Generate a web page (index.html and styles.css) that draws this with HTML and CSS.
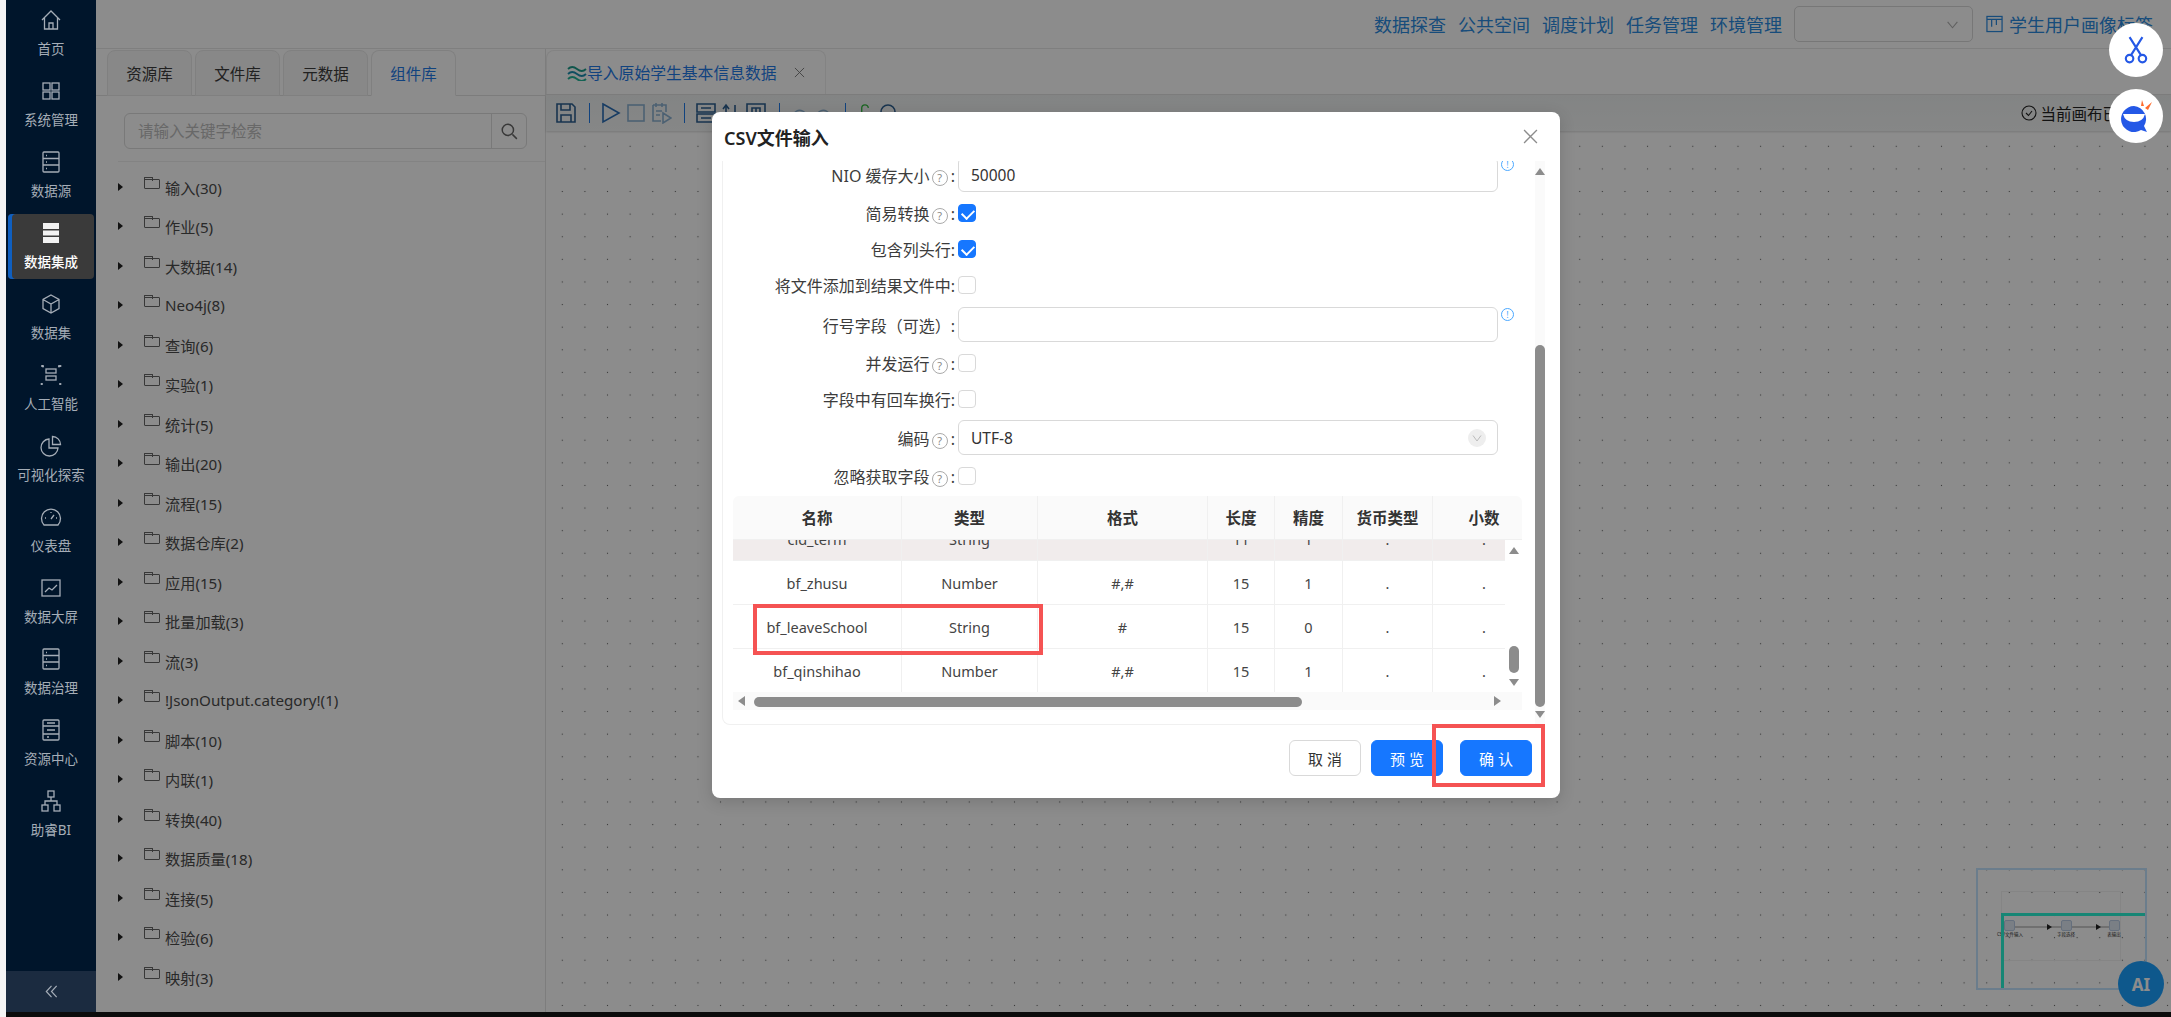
FILE: index.html
```html
<!DOCTYPE html>
<html lang="zh-CN">
<head>
    <meta charset="UTF-8">
    <title>数据集成</title>
    <link rel="stylesheet" href="styles.css">
</head>
<body>
    <div class="app">
        <aside class="sidebar">
            <nav class="nav">
                <a class="nav-item"><svg class="nav-icon" viewBox="0 0 24 24"><path d="M3 12 12 3l9 9M5.500 10v11h13V10M10 21v-6h4v6"/></svg><span>首页</span></a>
                <a class="nav-item"><svg class="nav-icon" viewBox="0 0 24 24"><rect x="4" y="4" width="7" height="7"/><rect x="13" y="4" width="7" height="7"/><rect x="4" y="13" width="7" height="7"/><rect x="13" y="13" width="7" height="7"/></svg><span>系统管理</span></a>
                <a class="nav-item"><svg class="nav-icon" viewBox="0 0 24 24"><rect x="4" y="2" width="16" height="20" rx="1"/><path d="M4 8.500h16M4 15h16M7 5.500h1M7 12h1M7 18.500h1"/></svg><span>数据源</span></a>
                <a class="nav-item active"><svg class="nav-icon" viewBox="0 0 24 24"><path class="solid" d="M4 2h16v6H4zM4 9.500h16v5H4zM4 16h16v6H4z"/></svg><span>数据集成</span></a>
                <a class="nav-item"><svg class="nav-icon" viewBox="0 0 24 24"><path d="M12 3l8 4.500v9L12 21l-8-4.500v-9zM4 7.500l8 4.500 8-4.500M12 12v9"/></svg><span>数据集</span></a>
                <a class="nav-item"><svg class="nav-icon" viewBox="0 0 24 24"><path class="dots" d="M3 3h.5M21 3h.5M2.500 21h.5M21 21h.5M4 3v.5M20 3v.5"/><rect x="7" y="6" width="10" height="4"/><rect x="7" y="13" width="10" height="4"/></svg><span>人工智能</span></a>
                <a class="nav-item"><svg class="nav-icon" viewBox="0 0 24 24"><path d="M10 5a8.500 8.500 0 1 0 9 9h-9zM13.500 2.500v8h8a8 8 0 0 0-8-8z"/></svg><span>可视化探索</span></a>
                <a class="nav-item"><svg class="nav-icon" viewBox="0 0 24 24"><path d="M5 20a9.500 9.500 0 1 1 14 0zM12 14l3-4M6 13h1M17 13h1M12 7v1"/></svg><span>仪表盘</span></a>
                <a class="nav-item"><svg class="nav-icon" viewBox="0 0 24 24"><rect x="3" y="4" width="18" height="16"/><path d="M6 16l4-4 3 2 5-5"/></svg><span>数据大屏</span></a>
                <a class="nav-item"><svg class="nav-icon" viewBox="0 0 24 24"><rect x="4" y="2" width="16" height="20" rx="1"/><path d="M4 8.500h16M4 15h16M7 5.500h1M7 12h1M7 18.500h1"/></svg><span>数据治理</span></a>
                <a class="nav-item"><svg class="nav-icon" viewBox="0 0 24 24"><rect x="4" y="2" width="16" height="20" rx="1"/><path d="M4 8h16M4 16h16M8 5h8M8 12h8M8 19h2"/></svg><span>资源中心</span></a>
                <a class="nav-item"><svg class="nav-icon" viewBox="0 0 24 24"><rect x="9" y="2" width="6" height="6"/><rect x="3" y="16" width="6" height="6"/><rect x="15" y="16" width="6" height="6"/><path d="M12 8v4M6 16v-4h12v4"/></svg><span>助睿BI</span></a>
            </nav>
            <div class="collapse">
                <svg viewBox="0 0 16 16"><path d="M8 2 2.500 8 8 14M13.500 2 8 8l5.500 6"/></svg>
            </div>
        </aside>

        <main class="main">
            <header class="topbar">
                <a class="top-link">数据探查</a>
                <a class="top-link">公共空间</a>
                <a class="top-link">调度计划</a>
                <a class="top-link">任务管理</a>
                <a class="top-link">环境管理</a>
                <div class="top-select"><svg viewBox="0 0 12 12"><path d="M1.500 3.500 6 9l4.500-5.500"/></svg></div>
                <svg class="project-icon" viewBox="0 0 18 18"><rect x="1" y="1" width="16" height="16"/><path d="M1 4h16M6 4v8M11 4v6"/></svg>
                <a class="top-link">学生用户画像标签</a>
            </header>

            <div class="workspace">
                <section class="panel">
                    <div class="tabs">
                        <div class="tab">资源库</div>
                        <div class="tab">文件库</div>
                        <div class="tab">元数据</div>
                        <div class="tab current">组件库</div>
                    </div>
                    <div class="search">
                        <div class="search-input">请输入关键字检索</div>
                        <div class="search-btn"><svg viewBox="0 0 16 16"><circle cx="7" cy="7" r="5"/><path d="m11 11 4 4"/></svg></div>
                    </div>
                    <ul class="tree">
                        <li><i class="caret"></i><i class="folder"></i>输入(30)</li>
                        <li><i class="caret"></i><i class="folder"></i>作业(5)</li>
                        <li><i class="caret"></i><i class="folder"></i>大数据(14)</li>
                        <li><i class="caret"></i><i class="folder"></i>Neo4j(8)</li>
                        <li><i class="caret"></i><i class="folder"></i>查询(6)</li>
                        <li><i class="caret"></i><i class="folder"></i>实验(1)</li>
                        <li><i class="caret"></i><i class="folder"></i>统计(5)</li>
                        <li><i class="caret"></i><i class="folder"></i>输出(20)</li>
                        <li><i class="caret"></i><i class="folder"></i>流程(15)</li>
                        <li><i class="caret"></i><i class="folder"></i>数据仓库(2)</li>
                        <li><i class="caret"></i><i class="folder"></i>应用(15)</li>
                        <li><i class="caret"></i><i class="folder"></i>批量加载(3)</li>
                        <li><i class="caret"></i><i class="folder"></i>流(3)</li>
                        <li><i class="caret"></i><i class="folder"></i>!JsonOutput.category!(1)</li>
                        <li><i class="caret"></i><i class="folder"></i>脚本(10)</li>
                        <li><i class="caret"></i><i class="folder"></i>内联(1)</li>
                        <li><i class="caret"></i><i class="folder"></i>转换(40)</li>
                        <li><i class="caret"></i><i class="folder"></i>数据质量(18)</li>
                        <li><i class="caret"></i><i class="folder"></i>连接(5)</li>
                        <li><i class="caret"></i><i class="folder"></i>检验(6)</li>
                        <li><i class="caret"></i><i class="folder"></i>映射(3)</li>
                    </ul>
                </section>

                <section class="editor">
                    <div class="editor-tabs">
                        <div class="editor-tab">
                            <svg class="wave" viewBox="0 0 20 16"><path d="M1 4q4-4 9 0t9 0"/><path class="mid" d="M1 9q4-4 9 0t9 0"/><path class="low" d="M1 14q4-4 9 0t9 0"/></svg>
                            <span>导入原始学生基本信息数据</span>
                            <svg class="tab-close" viewBox="0 0 12 12"><path d="m1 1 10 10M11 1 1 11"/></svg>
                        </div>
                    </div>
                    <div class="toolbar">
                        <svg class="tool" viewBox="0 0 22 22"><path class="dark" d="M2 2h15l3 3v15H2z"/><path class="dark" d="M6 2v6h9V2M6 20v-7h10v7"/></svg>
                        <i class="tool-sep"></i>
                        <svg class="tool" viewBox="0 0 22 22"><path d="M3 2l16 9-16 9z"/></svg>
                        <svg class="tool" viewBox="0 0 22 22"><rect class="soft" x="3" y="3" width="16" height="16"/></svg>
                        <svg class="tool" viewBox="0 0 22 22"><path class="soft" d="M3 3h13v7M3 3v16h8M6 1v4M12 1v4M6 9h6M6 13h4M13 11l8 5-8 5z"/></svg>
                        <i class="tool-sep"></i>
                        <svg class="tool" viewBox="0 0 22 22"><path class="dark" d="M2 2h18v8H2zM2 12h18v8H2zM6 6h10M6 16h10"/></svg>
                        <svg class="tool" viewBox="0 0 22 22"><path class="dark" d="M6 20V3M3 7l3-4 3 4M15 3v17"/></svg>
                        <svg class="tool" viewBox="0 0 22 22"><path class="dark" d="M2 2h18v18H2zM7 6h8v8H7zM11 6v8"/></svg>
                        <i class="tool-sep"></i>
                        <svg class="tool narrow" viewBox="0 0 22 22"><path class="soft" d="M4 12q6-8 14 0"/></svg>
                        <svg class="tool narrow" viewBox="0 0 22 22"><path class="soft" d="M4 12q8-8 14 0"/></svg>
                        <i class="tool-sep"></i>
                        <svg class="tool thin" viewBox="0 0 22 22"><path class="green" d="M15 5a4 4 0 0 0-8 0v12"/></svg>
                        <svg class="tool" viewBox="0 0 22 22"><circle class="dark" cx="11" cy="10" r="7"/></svg>
                        <div class="saved">
                            <svg viewBox="0 0 16 16"><circle cx="8" cy="8" r="7"/><path d="m5 8 2.500 2.500L11 6"/></svg>
                            <span>当前画布已保存</span>
                        </div>
                    </div>
                    <div class="canvas">
                        <div class="minimap">
                            <div class="mini-graph"></div>
                            <div class="mini-line"></div>
                            <i class="mini-arrow a1"></i>
                            <i class="mini-arrow a2"></i>
                            <div class="mini-node n1"><b></b>CSV文件输入</div>
                            <div class="mini-node n2"><b></b>字段选择</div>
                            <div class="mini-node n3"><b></b>表输出</div>
                            <div class="mini-view"></div>
                        </div>
                        <div class="ai-btn">AI</div>
                    </div>
                </section>
            </div>

            <div class="mask"></div>

            <div class="dialog">
                <div class="dialog-head">
                    <span class="dialog-title">CSV文件输入</span>
                    <svg class="dialog-close" viewBox="0 0 14 14"><path d="m1 1 12 12M13 1 1 13"/></svg>
                </div>
                <div class="dialog-body">
                    <div class="scroll-box">
                        <div class="form">
                            <div class="form-row field first">
                                <label>NIO 缓存大小 <i class="help">?</i>:</label>
                                <div class="input">50000</div>
                                <i class="info">!</i>
                            </div>
                            <div class="form-row">
                                <label>简易转换 <i class="help">?</i>:</label>
                                <i class="check on"></i>
                            </div>
                            <div class="form-row">
                                <label>包含列头行:</label>
                                <i class="check on"></i>
                            </div>
                            <div class="form-row">
                                <label>将文件添加到结果文件中:</label>
                                <i class="check"></i>
                            </div>
                            <div class="form-row field">
                                <label>行号字段（可选）:</label>
                                <div class="input"></div>
                                <i class="info">!</i>
                            </div>
                            <div class="form-row">
                                <label>并发运行 <i class="help">?</i>:</label>
                                <i class="check"></i>
                            </div>
                            <div class="form-row">
                                <label>字段中有回车换行:</label>
                                <i class="check"></i>
                            </div>
                            <div class="form-row field encoding">
                                <label>编码 <i class="help">?</i>:</label>
                                <div class="input select">UTF-8<svg viewBox="0 0 12 12"><path d="M2 3.500 6 9l4-5.500"/></svg></div>
                            </div>
                            <div class="form-row">
                                <label>忽略获取字段 <i class="help">?</i>:</label>
                                <i class="check"></i>
                            </div>
                        </div>

                        <div class="grid">
                            <div class="grid-row grid-head">
                                <div>名称</div><div>类型</div><div>格式</div><div>长度</div><div>精度</div><div>货币类型</div><div>小数</div>
                            </div>
                            <div class="grid-body">
                                <div class="grid-rows">
                                    <div class="grid-row odd">
                                        <div>cid_term</div><div>String</div><div></div><div>11</div><div>1</div><div>.</div><div>.</div>
                                    </div>
                                    <div class="grid-row">
                                        <div>bf_zhusu</div><div>Number</div><div>#,#</div><div>15</div><div>1</div><div>.</div><div>.</div>
                                    </div>
                                    <div class="grid-row">
                                        <div>bf_leaveSchool</div><div>String</div><div>#</div><div>15</div><div>0</div><div>.</div><div>.</div>
                                    </div>
                                    <div class="grid-row">
                                        <div>bf_qinshihao</div><div>Number</div><div>#,#</div><div>15</div><div>1</div><div>.</div><div>.</div>
                                    </div>
                                </div>
                                <div class="vbar small">
                                    <i class="arrow up"></i>
                                    <i class="thumb"></i>
                                    <i class="arrow down"></i>
                                </div>
                            </div>
                            <div class="hbar">
                                <i class="arrow left"></i>
                                <i class="thumb"></i>
                                <i class="arrow right"></i>
                            </div>
                            <div class="mark mark-row"></div>
                        </div>
                    </div>
                    <div class="vbar">
                        <i class="arrow up"></i>
                        <i class="thumb"></i>
                        <i class="arrow down"></i>
                    </div>
                </div>
                <div class="dialog-foot">
                    <button class="btn">取 消</button>
                    <button class="btn primary">预 览</button>
                    <button class="btn primary last">确 认</button>
                </div>
                <div class="mark mark-btn"></div>
            </div>

            <div class="float-btn scissors">
                <svg viewBox="0 0 28 28"><circle cx="8" cy="22" r="3.500"/><circle cx="20" cy="22" r="3.500"/><path d="M9.500 18.500 20 2M18.500 18.500 8 2"/></svg>
            </div>
            <div class="float-btn robot">
                <svg viewBox="0 0 32 34"><path class="face" d="M14 7a13 13 0 1 0 7 24l6 2-3-6a13 13 0 0 0-10-20z"/><path class="smile" d="M3 15h22q-2 8-11 8t-11-8z"/><path class="spark" d="M21 7l1-6 2 6zM25 9l7-6-4 8z"/></svg>
            </div>
        </main>
    </div>
</body>
</html>
```

FILE: styles.css
```css
* {
    box-sizing: border-box;
}
html, body {
    margin: 0;
    padding: 0;
    height: 1017px;
    overflow: hidden;
}
body {
    background: #0c0c0c;
    border-left: 6px solid #f4f4f4;
    font-family: "Noto Sans", "Noto Sans CJK SC", sans-serif;
    font-size: 16px;
    color: #333;
}
svg {
    display: block;
    fill: none;
}
i {
    font-style: normal;
}
.app {
    display: flex;
    height: 1012px;
}

/* left menu */
.sidebar {
    width: 90px;
    flex: none;
    display: flex;
    flex-direction: column;
    background: #00152b;
}
.nav {
    flex: 1;
    padding-top: 1px;
}
.nav-item {
    display: flex;
    flex-direction: column;
    align-items: center;
    height: 65px;
    margin: 0 2px 6px;
    padding-top: 5px;
    border-radius: 4px;
    color: #a5adb7;
    font-size: 13.5px;
    line-height: 20px;
    white-space: nowrap;
}
.nav-item span {
    margin-top: 5px;
}
.nav-icon {
    width: 24px;
    height: 28px;
    stroke: #a5adb7;
    stroke-width: 1.300;
}
.nav-icon .dots {
    stroke-width: 2;
    stroke-linecap: round;
}
.nav-item.active {
    background: #3a3a3a;
    color: #fff;
    font-weight: 500;
    box-shadow: inset 4px 0 0 #0f5fc0;
}
.nav-item.active .nav-icon {
    stroke: none;
}
.nav-item.active .solid {
    fill: #f2f2f2;
}
.collapse {
    height: 41px;
    flex: none;
    display: flex;
    align-items: center;
    justify-content: center;
    background: #1b2b40;
}
.collapse svg {
    width: 15px;
    height: 15px;
    stroke: #a5adb7;
    stroke-width: 1.300;
}

/* main area, the mask dims all of it */
.main {
    position: relative;
    flex: 1;
    display: flex;
    flex-direction: column;
    min-width: 0;
    background: #fff;
}
.mask {
    position: absolute;
    inset: 0;
    background: rgba(0, 0, 0, 0.45);
}
.topbar {
    height: 49px;
    flex: none;
    display: flex;
    align-items: center;
    justify-content: flex-end;
    padding: 0 18px 0 0;
    border-bottom: 1px solid #e8e8e8;
}
.top-link {
    margin-left: 12px;
    font-size: 18px;
    color: #2a8ae0;
    white-space: nowrap;
}
.top-select {
    width: 179px;
    height: 36px;
    margin-left: 12px;
    display: flex;
    align-items: center;
    justify-content: flex-end;
    padding-right: 13px;
    border: 1px solid #d9d9d9;
    border-radius: 5px;
}
.top-select svg {
    width: 13px;
    height: 13px;
    stroke: #b0b0b0;
}
.project-icon {
    width: 17px;
    height: 24px;
    margin-left: 13px;
    margin-right: -6px;
    stroke: #2a8ae0;
    stroke-width: 1.300;
}
.workspace {
    flex: 1;
    display: flex;
    min-height: 0;
}

/* component panel */
.panel {
    width: 450px;
    flex: none;
    border-right: 1px solid #e4e4e4;
}
.tabs {
    display: flex;
    gap: 3px;
    height: 47px;
    padding: 1px 0 0 11px;
    border-bottom: 1px solid #e2e2e2;
}
.tab {
    width: 85px;
    height: 46px;
    display: flex;
    align-items: center;
    justify-content: center;
    background: #f7f7f7;
    border: 1px solid #eaeaea;
    border-radius: 8px 8px 0 0;
    font-size: 15.5px;
    color: #3c3c3c;
}
.tab.current {
    background: #fff;
    border-bottom-color: #fff;
    color: #1f7ae8;
}
.search {
    display: flex;
    width: 403px;
    height: 36px;
    margin: 17px 0 0 28px;
    border: 1px solid #dcdcdc;
    border-radius: 6px;
}
.search-input {
    flex: 1;
    padding-left: 13px;
    line-height: 34px;
    font-size: 15.5px;
    color: #bdbdbd;
}
.search-btn {
    width: 35px;
    display: flex;
    align-items: center;
    justify-content: center;
    border-left: 1px solid #dcdcdc;
}
.search-btn svg {
    width: 18px;
    height: 18px;
    stroke: #666;
    stroke-width: 1.300;
}
.tree {
    list-style: none;
    margin: 12px 0 0 22px;
    padding: 5px 0 0;
    border-top: 1px solid #eee;
}
.tree li {
    display: flex;
    align-items: center;
    height: 39.500px;
    font-size: 15.200px;
    color: #4c4c4c;
    white-space: nowrap;
}
.caret {
    width: 0;
    height: 0;
    margin-left: 0;
    border-left: 5px solid #222;
    border-top: 4px solid transparent;
    border-bottom: 4px solid transparent;
}
.folder {
    position: relative;
    width: 16px;
    height: 10px;
    margin: -6px 5px 0 21px;
    border: 1.300px solid #666;
    border-radius: 1px;
}
.folder::before {
    content: "";
    position: absolute;
    left: -1px;
    top: -3px;
    width: 7px;
    height: 3px;
    border: 1.300px solid #666;
    border-bottom: none;
    border-radius: 1px 1px 0 0;
}

/* editor side */
.editor {
    flex: 1;
    display: flex;
    flex-direction: column;
    min-width: 0;
}
.editor-tabs {
    height: 46px;
    flex: none;
    padding-top: 1px;
    border-bottom: 1px solid #e4e4e4;
}
.editor-tab {
    display: flex;
    align-items: center;
    width: 280px;
    height: 44px;
    padding-left: 20px;
    border: 1px solid #eee;
    border-bottom: none;
    border-radius: 8px 8px 0 0;
    font-size: 15.800px;
    color: #1f7ae8;
    white-space: nowrap;
}
.wave {
    width: 20px;
    height: 16px;
    stroke: #1c9c8a;
    stroke-width: 1.800;
}
.wave .mid {
    stroke: #1d8fb0;
}
.wave .low {
    stroke: #25b59a;
}
.tab-close {
    width: 11px;
    height: 11px;
    margin-left: 17px;
    stroke: #777;
}
.toolbar {
    height: 36px;
    flex: none;
    display: flex;
    align-items: center;
    padding-left: 9px;
    background: linear-gradient(#eef1f1, #f4f6f6);
    box-shadow: 0 1px 2px rgba(0, 0, 0, 0.15);
}
.tool {
    width: 22px;
    height: 22px;
    margin-right: 3px;
    stroke: #2a6db5;
    stroke-width: 1.600;
}
.tool.narrow {
    width: 20px;
}
.tool.thin {
    width: 18px;
}
.tool .dark {
    stroke: #2d5f90;
}
.tool .soft {
    stroke: #8ab0d0;
}
.tool .green {
    stroke: #2fb83c;
}
.tool-sep {
    width: 1px;
    height: 20px;
    margin: 0 10px 0 9px;
    background: #1f7ae8;
}
.saved {
    display: flex;
    align-items: center;
    gap: 3px;
    margin-left: auto;
    padding-right: 22px;
    font-size: 15.500px;
    color: #222;
}
.saved svg {
    width: 16px;
    height: 16px;
    stroke: #222;
    stroke-width: 1.100;
}
.canvas {
    position: relative;
    flex: 1;
    background-image: radial-gradient(circle, #666 0.7px, transparent 1px);
    background-size: 22.620px 22.620px;
    background-position: 5px 4px;
}

/* the small map sits freely on the canvas */
.minimap {
    position: absolute;
    left: 1430px;
    top: 737px;
    width: 171px;
    height: 122px;
    border: 2px solid #c4e4ff;
}
.mini-graph {
    position: absolute;
    left: 23px;
    top: 21px;
    width: 120px;
    height: 70px;
    border: 1px solid #f2f2f2;
}
.mini-view {
    position: absolute;
    left: 23px;
    top: 43px;
    right: 0;
    bottom: 0;
    border-left: 3px solid #2af5d5;
    border-top: 3px solid #2af5d5;
}
.mini-line {
    position: absolute;
    left: 30px;
    top: 56px;
    width: 105px;
    height: 2px;
    background: #ccc;
}
.mini-arrow {
    position: absolute;
    top: 54px;
    border-left: 5px solid #222;
    border-top: 3px solid transparent;
    border-bottom: 3px solid transparent;
}
.a1 {
    left: 69px;
}
.a2 {
    left: 118px;
}
.mini-node {
    position: absolute;
    top: 50px;
    width: 24px;
    font-size: 4.500px;
    line-height: 6px;
    text-align: center;
    white-space: nowrap;
}
.mini-node b {
    display: block;
    width: 11px;
    height: 11px;
    margin: 0 auto;
    background: #dfe8f3;
    border: 1px solid #b8cbe4;
    border-radius: 2px;
}
.n1 {
    left: 19px;
}
.n2 {
    left: 76px;
}
.n3 {
    left: 124px;
}
.ai-btn {
    position: absolute;
    left: 1572px;
    top: 830px;
    width: 46px;
    height: 46px;
    display: flex;
    align-items: center;
    justify-content: center;
    border-radius: 50%;
    background: #1aa0ff;
    color: #fff;
    font-size: 17px;
    font-weight: 700;
}

/* dialog */
.dialog {
    position: absolute;
    left: 616px;
    top: 112px;
    width: 848px;
    height: 686px;
    display: flex;
    flex-direction: column;
    background: #fff;
    border-radius: 8px;
    box-shadow: 0 4px 16px rgba(0, 0, 0, 0.15);
}
.dialog-head {
    height: 49px;
    flex: none;
    display: flex;
    align-items: center;
    justify-content: space-between;
    padding: 0 22px 0 12px;
}
.dialog-title {
    font-size: 18px;
    font-weight: 600;
    color: #222;
}
.dialog-close {
    width: 15px;
    height: 15px;
    stroke: #8c8c8c;
    stroke-width: 1.200;
}
.dialog-body {
    display: flex;
    height: 564px;
    margin: 0 15px 0 10px;
    border-left: 1px solid #f0f0f0;
    border-bottom: 1px solid #f0f0f0;
    border-bottom-left-radius: 8px;
    flex: none;
}
.scroll-box {
    position: relative;
    flex: 1;
    min-width: 0;
    overflow: hidden;
}
.form {
    margin-top: -4px;
}
.form-row {
    display: flex;
    align-items: center;
    height: 36px;
}
.form-row.field {
    height: 35px;
    margin: 4px 0 3px;
    align-items: center;
}
.form-row.first {
    margin-top: 0;
}
.form-row.encoding {
    margin-top: 3px;
}
.form-row label {
    width: 235px;
    flex: none;
    padding-right: 3px;
    text-align: right;
    white-space: nowrap;
    color: #3c3c3c;
}
.help {
    display: inline-block;
    width: 16px;
    height: 16px;
    margin: 0 3px 0 -2px;
    border: 1px solid #aaa;
    border-radius: 50%;
    font-size: 11px;
    line-height: 14px;
    text-align: center;
    color: #888;
    vertical-align: 0;
}
.check {
    position: relative;
    width: 18px;
    height: 18px;
    border: 1px solid #d9d9d9;
    border-radius: 4px;
    background: #fff;
}
.check.on {
    background: #1677ff;
    border-color: #1677ff;
}
.check.on::after {
    content: "";
    position: absolute;
    left: 5px;
    top: 1.500px;
    width: 6px;
    height: 10px;
    border: solid #fff;
    border-width: 0 2px 2px 0;
    transform: rotate(45deg);
}
.input {
    width: 540px;
    height: 35px;
    flex: none;
    display: flex;
    align-items: center;
    justify-content: space-between;
    padding: 0 12px;
    border: 1px solid #d9d9d9;
    border-radius: 6px;
    font-size: 15.500px;
    color: #333;
}
.input.select svg {
    width: 18px;
    height: 18px;
    padding: 3px;
    border-radius: 50%;
    background: #eee;
    stroke: #bbb;
    margin-right: -1px;
}
.info {
    width: 13px;
    height: 13px;
    margin: -21px 0 0 3px;
    border: 1px solid #4aa8ff;
    border-radius: 50%;
    font-size: 9px;
    line-height: 11px;
    text-align: center;
    color: #4aa8ff;
}

/* field table */
.grid {
    width: 789px;
    margin: 2px 0 0 10px;
    font-size: 14.500px;
    color: #444;
}
.grid-row {
    display: grid;
    grid-template-columns: 169px 136px 170px 67px 68px 90px 102px;
    height: 44px;
    overflow: hidden;
    border-bottom: 1px solid #f0f0f0;
}
.grid-row > div {
    display: flex;
    align-items: center;
    justify-content: center;
    border-right: 1px solid #f0f0f0;
    white-space: nowrap;
}
.grid-row > div:last-child {
    border-right: none;
}
.grid-head {
    height: 44px;
    background: #fafafa;
    border-radius: 6px 6px 0 0;
    font-size: 15.500px;
    font-weight: 600;
    color: #333;
}
.grid-body {
    display: flex;
    height: 152px;
    overflow: hidden;
}
.grid-rows {
    width: 772px;
    margin-top: -23px;
}
.grid-row.odd {
    background: #f1ecec;
}
.hbar {
    position: relative;
    height: 18px;
    background: #fafafa;
}
.hbar .thumb {
    position: absolute;
    left: 21px;
    top: 5px;
    width: 548px;
    height: 10px;
    border-radius: 5px;
    background: #8c8c8c;
}
.arrow {
    position: absolute;
    width: 0;
    height: 0;
    border: 5px solid transparent;
}
.arrow.left {
    left: 5px;
    top: 4px;
    border-left: none;
    border-right: 7px solid #8c8c8c;
}
.arrow.right {
    right: 21px;
    top: 4px;
    border-right: none;
    border-left: 7px solid #8c8c8c;
}
.arrow.up {
    left: 0;
    top: 7px;
    border-top: none;
    border-bottom: 7px solid #8c8c8c;
}
.arrow.down {
    left: 0;
    bottom: 6px;
    border-bottom: none;
    border-top: 7px solid #8c8c8c;
}
.vbar {
    position: relative;
    width: 10px;
    flex: none;
    background: #fafafa;
}
.vbar .thumb {
    position: absolute;
    left: 0;
    top: 184px;
    width: 10px;
    height: 362px;
    border-radius: 5px;
    background: #8c8c8c;
}
.vbar.small {
    width: 17px;
    background: #fff;
}
.vbar.small .thumb {
    left: 4px;
    top: 106px;
    height: 27px;
}
.vbar.small .arrow {
    left: 4px;
}
.dialog-foot {
    flex: 1;
    display: flex;
    justify-content: flex-end;
    padding: 15px 28px 0 0;
    gap: 10px;
}
.btn {
    width: 72px;
    height: 36px;
    border: 1px solid #d9d9d9;
    border-radius: 6px;
    background: #fff;
    font-family: inherit;
    font-size: 15px;
    color: #333;
}
.btn.primary {
    border-color: #1677ff;
    background: #1677ff;
    color: #fff;
}
.btn.last {
    margin-left: 7px;
}
.mark {
    position: absolute;
    border: 4px solid #f55353;
}
.mark-row {
    left: 30px;
    top: 443px;
    width: 290px;
    height: 51px;
}
.mark-btn {
    left: 720px;
    top: 612px;
    width: 113px;
    height: 63px;
}

/* browser plugin buttons over everything */
.float-btn {
    position: absolute;
    right: 8px;
    width: 54px;
    height: 54px;
    display: flex;
    align-items: center;
    justify-content: center;
    border-radius: 50%;
    background: #fff;
}
.scissors {
    top: 23px;
}
.scissors svg {
    width: 30px;
    height: 30px;
    stroke: #2458e6;
    stroke-width: 2;
}
.robot {
    top: 89px;
}
.robot svg {
    width: 32px;
    height: 34px;
}
.robot .face {
    fill: #2458e6;
}
.robot .smile {
    fill: #fff;
}
.robot .spark {
    fill: #ff6a2b;
}
```
